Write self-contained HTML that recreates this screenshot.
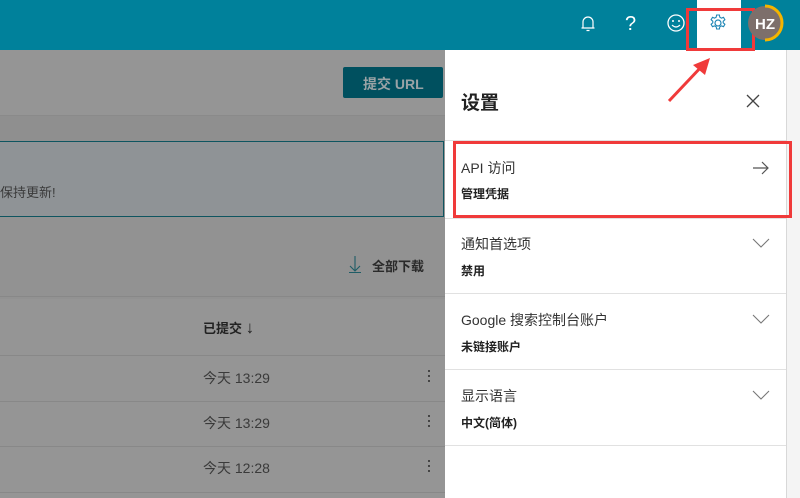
<!DOCTYPE html>
<html><head><meta charset="utf-8"><style>
*{margin:0;padding:0;box-sizing:border-box}
body{width:800px;height:498px;overflow:hidden;position:relative;background:#959595;font-family:"Liberation Sans","Noto Sans CJK SC",sans-serif;color:#333}
.a{position:absolute}
.top{left:0;top:0;width:800px;height:50px;background:#00819b}
.line{position:absolute;height:1px;background:#888}
.t{position:absolute;font-size:14px;color:#3a3a3a;white-space:nowrap}
.panel{left:445px;top:50px;width:341px;height:448px;background:#fff}
.strip{left:786px;top:50px;width:14px;height:448px;background:#f4f4f4;border-left:1px solid #d8d8d8}
.div{position:absolute;left:445px;width:341px;height:1px;background:#e1e1e1}
.h{position:absolute;left:461px;font-size:14px;color:#333}
.s{position:absolute;left:461px;font-size:12px;font-weight:bold;color:#222}
.dots{position:absolute;left:428px;width:3px}
.dots i{display:block;width:2px;height:2px;background:#444;margin-bottom:3px}
</style></head><body>
<div class="a top"></div>
<div class="a" style="left:343px;top:67px;width:100px;height:31px;background:#00505f;border-radius:2px"></div>
<div class="t" style="left:363px;top:74px;font-weight:bold;color:#9aa3a6;font-size:14px">提交 URL</div>
<div class="line" style="left:0;top:115px;width:445px;background:#8a8a8a"></div>
<div class="a" style="left:0;top:116px;width:445px;height:25px;background:#8f8f8f"></div>
<div class="a" style="left:-2px;top:141px;width:446px;height:76px;background:#8f9396;border:1px solid #0e5560"></div>
<div class="t" style="left:0;top:182px;font-size:13px">保持更新!</div>
<div class="a" style="left:0;top:217px;width:445px;height:82px;background:#929292"></div>
<svg class="a" style="left:349px;top:255px" width="12" height="18"><path d="M6 1V16M1 11L6 16L11 11M0 17.5H12" stroke="#1f5d66" stroke-width="1.1" fill="none"/></svg>
<div class="t" style="left:372px;top:256px;font-weight:bold;font-size:13px;color:#2a2a2a">全部下载</div>
<div class="line" style="left:0;top:296px;width:445px"></div>
<div class="t" style="left:203px;top:318px;font-weight:bold;font-size:13px;color:#222">已提交 <span style="font-weight:normal;font-size:17px">↓</span></div>
<div class="line" style="left:0;top:355px;width:445px"></div>
<div class="t" style="left:203px;top:368px;font-size:14px">今天 13:29</div>
<div class="line" style="left:0;top:401px;width:445px"></div>
<div class="t" style="left:203px;top:413px;font-size:14px">今天 13:29</div>
<div class="line" style="left:0;top:446px;width:445px"></div>
<div class="t" style="left:203px;top:458px;font-size:14px">今天 12:28</div>
<div class="line" style="left:0;top:492px;width:445px"></div>
<div class="dots" style="top:370px"><i></i><i></i><i></i></div>
<div class="dots" style="top:415px"><i></i><i></i><i></i></div>
<div class="dots" style="top:460px"><i></i><i></i><i></i></div>
<div class="a panel"></div>
<div class="a strip"></div>
<div class="t" style="left:461px;top:88px;font-size:19px;font-weight:bold;color:#222">设置</div>
<svg class="a" style="left:745px;top:93px" width="16" height="16"><path d="M2 2L14 14M14 2L2 14" stroke="#444" stroke-width="1.3"/></svg>
<div class="div" style="top:140px"></div>
<div class="h" style="top:158px">API 访问</div>
<div class="s" style="top:185px">管理凭据</div>
<svg class="a" style="left:752px;top:160px" width="18" height="16"><path d="M1 8H16M10 2L16 8L10 14" stroke="#555" stroke-width="1.2" fill="none"/></svg>
<div class="div" style="top:218px"></div>
<div class="h" style="top:234px">通知首选项</div>
<div class="s" style="top:262px">禁用</div>
<div class="div" style="top:293px"></div>
<div class="h" style="top:310px">Google 搜索控制台账户</div>
<div class="s" style="top:338px">未链接账户</div>
<div class="div" style="top:369px"></div>
<div class="h" style="top:386px">显示语言</div>
<div class="s" style="top:414px">中文(简体)</div>
<div class="div" style="top:445px"></div>
<svg class="a" style="left:752px;top:238px" width="18" height="10"><path d="M1 1L9 9L17 1" stroke="#777" stroke-width="1.1" fill="none"/></svg>
<svg class="a" style="left:752px;top:314px" width="18" height="10"><path d="M1 1L9 9L17 1" stroke="#777" stroke-width="1.1" fill="none"/></svg>
<svg class="a" style="left:752px;top:390px" width="18" height="10"><path d="M1 1L9 9L17 1" stroke="#777" stroke-width="1.1" fill="none"/></svg>
<div class="a" style="left:453px;top:141px;width:339px;height:77px;border:3px solid #f03a3a"></div>
<svg class="a" style="left:580px;top:14px" width="16" height="20"><path d="M3 14V8a5 5 0 0 1 10 0v6H3zM1.5 14h13M6.5 16.5h3" stroke="#fff" stroke-width="1.2" fill="none"/></svg>
<div class="t" style="left:625px;top:13px;color:#fff;font-size:20px">?</div>
<svg class="a" style="left:666px;top:13px" width="20" height="20"><circle cx="10" cy="10" r="8" stroke="#fff" stroke-width="1.3" fill="none"/><circle cx="7" cy="8" r="1" fill="#fff"/><circle cx="13" cy="8" r="1" fill="#fff"/><path d="M6 12q4 4 8 0" stroke="#fff" stroke-width="1.2" fill="none"/></svg>
<div class="a" style="left:697px;top:0;width:44px;height:50px;background:#fff"></div>
<svg class="a" style="left:708px;top:13px" width="20" height="20" viewBox="0 0 20 20"><circle cx="10" cy="10" r="3" stroke="#1f86b5" stroke-width="1.2" fill="none"/><path d="M8.6 2h2.8l.4 2.2 1.6.9 2.1-.8 1.4 2.4-1.7 1.5v1.6l1.7 1.5-1.4 2.4-2.1-.8-1.6.9-.4 2.2H8.6l-.4-2.2-1.6-.9-2.1.8-1.4-2.4 1.7-1.5V8.2L3.1 6.7l1.4-2.4 2.1.8 1.6-.9z" stroke="#1f86b5" stroke-width="1.1" fill="none"/></svg>
<div class="a" style="left:686px;top:8px;width:69px;height:43px;border:3px solid #f03a3a"></div>
<svg class="a" style="left:745px;top:3px" width="42" height="42"><circle cx="20" cy="20" r="17" fill="#7d6f6b"/><path d="M20 3a17 17 0 0 1 0 34" stroke="#f4b400" stroke-width="3" fill="none"/><text x="20" y="26" text-anchor="middle" font-family="Liberation Sans" font-weight="bold" font-size="15" fill="#fff">HZ</text></svg>
<svg class="a" style="left:665px;top:55px" width="50" height="50"><path d="M4 46L38 10" stroke="#f03a3a" stroke-width="3"/><path d="M45 3L28 10L40 20z" fill="#f03a3a"/></svg>
</body></html>
